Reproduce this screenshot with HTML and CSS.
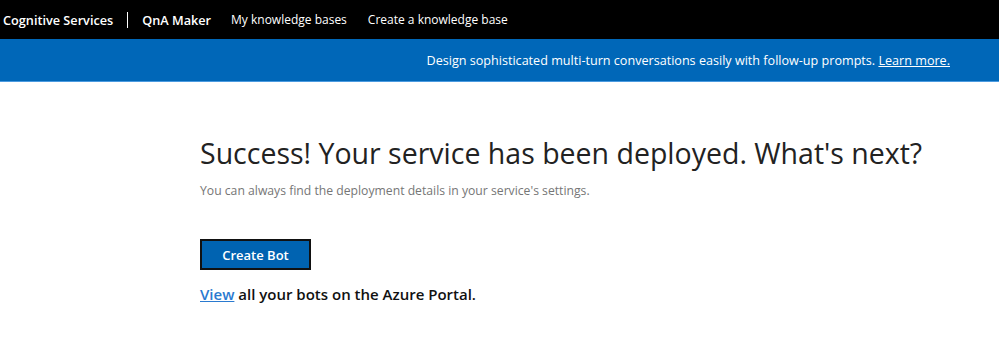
FILE: index.html
```html
<!DOCTYPE html>
<html lang="en">
<head>
    <meta charset="UTF-8">
    <meta name="viewport" content="width=device-width, initial-scale=1.0">
    <title>QnA Maker</title>
    <link rel="stylesheet" href="styles.css">
</head>
<body>
    <nav class="top-nav">
        <span class="brand">Cognitive Services</span>
        <span class="divider"></span>
        <span class="product">QnA Maker</span>
        <a href="#" class="nav-link">My knowledge bases</a>
        <a href="#" class="nav-link">Create a knowledge base</a>
    </nav>

    <div class="banner">
        <span>Design sophisticated multi-turn conversations easily with follow-up prompts. <a href="#">Learn more.</a></span>
    </div>

    <div class="content">
        <h1>Success! Your service has been deployed. What's next?</h1>
        <p class="sub">You can always find the deployment details in your service's settings.</p>

        <button class="btn">Create Bot</button>

        <p class="view-line"><a href="#">View</a> all your bots on the Azure Portal.</p>
    </div>
</body>
</html>
```

FILE: styles.css
```css
body {
    margin: 0;
    font-family: "Open Sans", "Noto Sans", sans-serif;
    background-color: #ffffff;
    color: #222;
}
.top-nav {
    display: flex;
    align-items: center;
    height: 39px;
    background: #000000;
    color: #ffffff;
    font-size: 12px;
    padding-left: 3px;
}
.brand {
    font-size: 12.7px;
    font-weight: 600;
}
.divider {
    width: 1px;
    height: 16px;
    background: #ffffff;
    margin: 0 14px;
}
.product {
    font-size: 12.7px;
    font-weight: 600;
    margin-right: 20px;
}
.nav-link {
    color: #ffffff;
    text-decoration: none;
    margin-right: 21px;
}
.banner {
    height: 43px;
    box-sizing: border-box;
    background: #0067b8;
    border-bottom: 1px solid #4b9be0;
    color: #ffffff;
    font-size: 12.6px;
    display: flex;
    align-items: center;
    justify-content: flex-end;
    padding-right: 49px;
}
.banner a {
    color: #ffffff;
}
.content {
    padding-left: 200px;
    padding-top: 52px;
}
h1 {
    margin: 0;
    font-size: 28.5px;
    font-weight: 400;
    color: #222;
}
.sub {
    margin: 10px 0 0;
    font-size: 12.2px;
    color: #767676;
}
.btn {
    margin-top: 40px;
    width: 111px;
    height: 31px;
    border: 2px solid #111;
    background: #0063b1;
    color: #ffffff;
    font-family: inherit;
    font-size: 13px;
    font-weight: 600;
    cursor: pointer;
}
.view-line {
    margin: 14px 0 0;
    font-size: 15px;
    font-weight: 600;
    color: #111;
}
.view-line a {
    color: #2a7ad0;
}
```
